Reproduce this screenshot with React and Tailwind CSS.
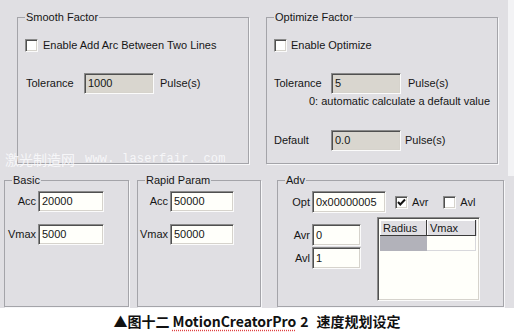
import React from "react";

const UI = "font-['Liberation_Sans',Arial,sans-serif] text-[11px] leading-[13px] text-[#161616]";
const SUNKEN =
  "border border-t-[#8a8a8a] border-l-[#8a8a8a] border-b-[#fbfbfb] border-r-[#fbfbfb] shadow-[inset_1px_1px_0_#505050,inset_-1px_-1px_0_#d6d3cc]";

// ── Group box ──────────────────────────────────────────────
function Group({ title, className = "", children }) {
  return (
    <div className={`relative border border-[#a4a4a9] shadow-[1px_1px_0_#f7f7f9] ${className}`}>
      <span className="absolute -top-[7px] left-[7px] px-[1px] bg-[#e0dfe3]">{title}</span>
      {children}
    </div>
  );
}

// ── Edit box ───────────────────────────────────────────────
function Edit({ value, disabled, className = "" }) {
  return (
    <div
      className={`${SUNKEN} flex items-center pl-[3px] ${disabled ? "bg-[#d9d6cf]" : "bg-[#fffffa]"} ${className}`}
    >
      {value}
    </div>
  );
}

// ── Check box ──────────────────────────────────────────────
function Check({ checked }) {
  return (
    <div className={`${SUNKEN} w-[13px] h-[13px] bg-white flex items-center justify-center shrink-0`}>
      {checked && (
        <svg width="9" height="9" viewBox="0 0 9 9">
          <path d="M1 4 L3.3 6.5 L8 1.5" fill="none" stroke="#111" strokeWidth="2" />
        </svg>
      )}
    </div>
  );
}

function Field({ label, labelW, value, inputW, gap = "gap-[2px]" }) {
  return (
    <div className={`flex items-center ${gap}`}>
      <span className={`${labelW} text-right`}>{label}</span>
      <Edit value={value} className={inputW} />
    </div>
  );
}

export default function App() {
  return (
    <div className={`${UI} w-[514px] h-[335px] bg-[#f3f3f5] relative overflow-hidden`}>
      {/* top section */}
      <div className="w-[508px] h-[176px] bg-[#e0dfe3] flex gap-[17px] pt-[17px] pl-[17px]">
        <Group title="Smooth Factor" className="w-[232px] h-[147px]">
          <div className="pl-[7px] pt-[21px]">
            <div className="flex items-center gap-[5px]">
              <Check />
              <span>Enable Add Arc Between Two Lines</span>
            </div>
            <div className="flex items-center mt-[21px]">
              <span className="w-[59px] pl-[1px]">Tolerance</span>
              <Edit value="1000" disabled className="w-[70px] h-[21px]" />
              <span className="ml-[6px]">Pulse(s)</span>
            </div>
          </div>
        </Group>

        <Group title="Optimize Factor" className="w-[232px] h-[147px]">
          <div className="pl-[7px] pt-[21px]">
            <div className="flex items-center gap-[4px]">
              <Check />
              <span>Enable Optimize</span>
            </div>
            <div className="flex items-center mt-[21px]">
              <span className="w-[57px]">Tolerance</span>
              <Edit value="5" disabled className="w-[70px] h-[21px]" />
              <span className="ml-[7px]">Pulse(s)</span>
            </div>
            <div className="ml-[35px] mt-[1px]">0: automatic calculate a default value</div>
            <div className="flex items-center mt-[22px]">
              <span className="w-[57px]">Default</span>
              <Edit value="0.0" disabled className="w-[70px] h-[21px]" />
              <span className="ml-[4px]">Pulse(s)</span>
            </div>
          </div>
        </Group>
      </div>

      {/* bottom section */}
      <div className="h-[132px] bg-[#e0dfe3] flex pt-[4px] pl-[4px]">
        <Group title="Basic" className="w-[125px] h-[127px] shrink-0">
          <div className="pt-[10px] flex flex-col gap-[12px]">
            <Field label="Acc" labelW="w-[31px]" value="20000" inputW="w-[66px] h-[21px]" />
            <Field label="Vmax" labelW="w-[31px]" value="5000" inputW="w-[66px] h-[21px]" />
          </div>
        </Group>

        <Group title="Rapid Param" className="w-[124px] h-[127px] ml-[8px] shrink-0">
          <div className="pt-[10px] flex flex-col gap-[12px]">
            <Field label="Acc" labelW="w-[30px]" value="50000" inputW="w-[64px] h-[21px]" />
            <Field label="Vmax" labelW="w-[30px]" value="50000" inputW="w-[64px] h-[21px]" />
          </div>
        </Group>

        <Group title="Adv" className="w-[227px] h-[127px] ml-[16px] shrink-0">
          <div className="pt-[10px]">
            <div className="flex items-center">
              <Field label="Opt" labelW="w-[32px]" value="0x00000005" inputW="w-[74px] h-[22px]" />
              <div className="ml-[9px] flex items-center gap-[4px]">
                <Check checked />
                <span>Avr</span>
              </div>
              <div className="ml-[15px] flex items-center gap-[4px]">
                <Check />
                <span>Avl</span>
              </div>
            </div>

            <div className="flex items-start mt-[4px]">
              <div className="pt-[7px] flex flex-col gap-[1px]">
                <Field label="Avr" labelW="w-[32px]" value="0" inputW="w-[49px] h-[22px]" />
                <Field label="Avl" labelW="w-[32px]" value="1" inputW="w-[49px] h-[22px]" />
              </div>

              {/* list control */}
              <div className={`${SUNKEN} ml-[16px] w-[103px] h-[84px] bg-[#fffffa] p-[2px]`}>
                <div className="flex h-[16px] bg-[#e0dfe3]">
                  <div className="w-[47px] border-r border-b border-[#3a3a3a] shadow-[inset_1px_1px_0_#fff] pl-[3px] flex items-end">
                    Radius
                  </div>
                  <div className="w-[49px] border-r border-b border-[#3a3a3a] shadow-[inset_1px_1px_0_#fff] pl-[3px] flex items-end">
                    Vmax
                  </div>
                </div>
                <div className="flex h-[15px]">
                  <div className="w-[47px] bg-[#b2b2ba]" />
                  <div className="w-[49px] border-r border-b border-[#d8d8dc]" />
                </div>
              </div>
            </div>
          </div>
        </Group>
      </div>

      {/* watermark */}
      <div className="absolute left-[5px] top-[151px] flex items-center text-[#fbfbfd]/85 pointer-events-none">
        <span className="font-['Noto_Sans_CJK_SC',sans-serif] text-[14px] leading-[16px]">激光制造网</span>
        <span className="ml-[10px] font-['Liberation_Mono',monospace] text-[12px] leading-[16px] tracking-[0.2px]">
          www. laserfair. com
        </span>
      </div>

      {/* caption */}
      <div className="h-[27px] bg-white flex items-center justify-center font-['Noto_Sans_CJK_SC',sans-serif] font-bold text-[14px] text-[#111]">
        <span>▲图十二 </span>
        <span className="ml-[3px] underline decoration-dotted decoration-[#e04040] underline-offset-[3px]">
          MotionCreatorPro
        </span>
        <span className="ml-[4px]">2</span>
        <span className="ml-[8px]">速度规划设定</span>
      </div>
    </div>
  );
}
